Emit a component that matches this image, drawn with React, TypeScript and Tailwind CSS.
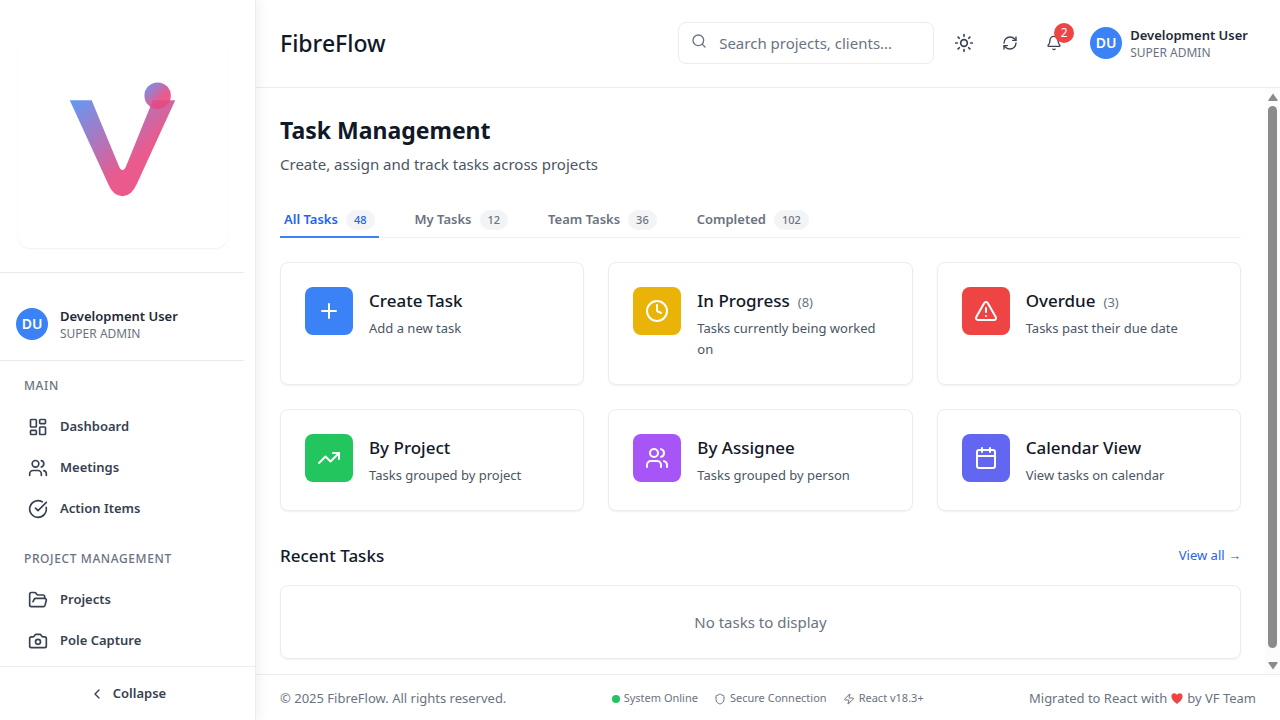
import type { ReactNode } from 'react';
import {
  Bell,
  Calendar,
  Camera,
  ChevronLeft,
  CircleCheckBig,
  Clock,
  FolderOpen,
  LayoutDashboard,
  Plus,
  RefreshCw,
  Search,
  Shield,
  Sun,
  TrendingUp,
  TriangleAlert,
  Users,
  Zap,
  type LucideIcon,
} from 'lucide-react';

type NavSection = { title: string; items: { label: string; icon: LucideIcon }[] };

const sections: NavSection[] = [
  {
    title: 'MAIN',
    items: [
      { label: 'Dashboard', icon: LayoutDashboard },
      { label: 'Meetings', icon: Users },
      { label: 'Action Items', icon: CircleCheckBig },
    ],
  },
  {
    title: 'PROJECT MANAGEMENT',
    items: [
      { label: 'Projects', icon: FolderOpen },
      { label: 'Pole Capture', icon: Camera },
    ],
  },
];

const tabs = [
  { label: 'All Tasks', count: 48, active: true },
  { label: 'My Tasks', count: 12, active: false },
  { label: 'Team Tasks', count: 36, active: false },
  { label: 'Completed', count: 102, active: false },
];

type CardData = { title: string; text: string; icon: LucideIcon; color: string; count?: number };

const cards: CardData[] = [
  { title: 'Create Task', text: 'Add a new task', icon: Plus, color: 'bg-[#3b82f6]' },
  { title: 'In Progress', text: 'Tasks currently being worked on', icon: Clock, color: 'bg-[#eab308]', count: 8 },
  { title: 'Overdue', text: 'Tasks past their due date', icon: TriangleAlert, color: 'bg-[#ef4444]', count: 3 },
  { title: 'By Project', text: 'Tasks grouped by project', icon: TrendingUp, color: 'bg-[#22c55e]' },
  { title: 'By Assignee', text: 'Tasks grouped by person', icon: Users, color: 'bg-[#a855f7]' },
  { title: 'Calendar View', text: 'View tasks on calendar', icon: Calendar, color: 'bg-[#6366f1]' },
];

function Logo() {
  return (
    <svg viewBox="0 0 208 208" className="block w-full" role="img" aria-label="Company logo">
      <defs>
        <linearGradient id="mark" x1="0" y1="0" x2="1" y2="1">
          <stop offset="0" stopColor="#4f8ff7" />
          <stop offset="0.62" stopColor="#e84880" />
          <stop offset="1" stopColor="#e84880" />
        </linearGradient>
      </defs>
      <g fill="url(#mark)" fillOpacity="0.9">
        <path d="M51 60.500H73L99.500 124.500Q104 137 108.500 124.500L134.500 60.500H157L118.500 144.500Q113 157 104 157Q94.500 157 89.500 144.500Z" />
        <circle cx="139.300" cy="56" r="13.300" />
      </g>
    </svg>
  );
}

function Person() {
  return (
    <>
      <span className="flex size-8 shrink-0 items-center justify-center rounded-full bg-[#3b82f6] text-sm font-semibold text-white">
        DU
      </span>
      <span className="flex flex-col text-left">
        <span className="text-[13px] leading-5 font-semibold text-[#1f2937]">Development User</span>
        <span className="text-xs leading-4 text-[#6b7280]">SUPER ADMIN</span>
      </span>
    </>
  );
}

function Sidebar() {
  return (
    <aside className="z-10 flex w-64 shrink-0 flex-col border-r border-[#ececee] bg-white shadow-[2px_0_12px_rgba(0,0,0,0.07)]">
      <div className="min-h-0 flex-1 overflow-hidden pr-[11px]">
        <div className="border-b border-[#e9eaf0] pt-[39px] pr-[17px] pb-6 pl-[18px]">
          <div className="rounded-xl border border-transparent shadow-[0_1px_2px_rgba(0,0,0,0.06)]">
            <Logo />
          </div>
        </div>
        <div className="flex items-center gap-3 border-b border-[#e9eaf0] px-4 pt-[33px] pb-[18px]">
          <Person />
        </div>
        <nav className="pt-3">
          {sections.map((section) => (
            <section key={section.title} className="mb-[17px]">
              <h2 className="px-6 pt-[5px] pb-3 text-xs leading-4 font-medium tracking-wider text-[#6b7280]">{section.title}</h2>
              <ul className="flex flex-col">
                {section.items.map(({ label, icon: Icon }) => (
                  <li key={label}>
                    <a href="#" className="flex h-[41px] items-center gap-3 pl-7 text-[13px] font-semibold text-[#374151]">
                      <Icon className="size-5" />
                      {label}
                    </a>
                  </li>
                ))}
              </ul>
            </section>
          ))}
        </nav>
      </div>
      <div className="border-t border-[#ececee] p-2">
        <button className="flex h-[37px] w-full items-center justify-center gap-2 text-[13px] font-semibold text-[#374151]">
          <ChevronLeft className="size-4" />
          Collapse
        </button>
      </div>
    </aside>
  );
}

function IconButton({ label, children }: { label: string; children: ReactNode }) {
  return (
    <button aria-label={label} className="relative rounded-lg p-2 text-[#374151]">
      {children}
    </button>
  );
}

function Header() {
  return (
    <header className="flex h-[88px] shrink-0 items-center justify-between border-b border-[#ececee] px-6">
      <p className="text-[23px] font-medium text-[#111827]">FibreFlow</p>
      <div className="flex items-center gap-3 pb-0.5">
        <label className="flex h-[42px] w-64 items-center gap-3 rounded-lg border border-[#ececee] px-3">
          <Search className="mb-1 size-4 shrink-0 text-[#6b7280]" />
          <input
            type="search"
            aria-label="Search"
            placeholder="Search projects, clients..."
            className="w-full min-w-0 bg-transparent pt-0.5 text-[15px] text-[#111827] outline-none placeholder:text-[#6b7280]"
          />
        </label>
        <IconButton label="Toggle theme">
          <Sun className="size-5" />
        </IconButton>
        <IconButton label="Refresh">
          <RefreshCw className="size-4" />
        </IconButton>
        <IconButton label="Notifications">
          <Bell className="size-4" />
          <span className="absolute -top-1 -right-1 flex size-5 items-center justify-center rounded-full bg-[#ef4444] text-xs text-white">
            2
          </span>
        </IconButton>
        <button className="flex items-center gap-2 rounded-lg px-2">
          <Person />
        </button>
      </div>
    </header>
  );
}

function TaskCard({ title, text, icon: Icon, color, count }: CardData) {
  return (
    <article className="flex items-start gap-4 rounded-lg border border-[#ececee] p-6 shadow-[0_1px_2px_rgba(0,0,0,0.06)]">
      <div className={`flex size-12 shrink-0 items-center justify-center rounded-lg text-white ${color}`}>
        <Icon className="size-6" />
      </div>
      <div className="min-w-0 flex-1">
        <div className="flex items-baseline gap-2">
          <h3 className="text-[17px] leading-[27px] font-medium text-[#111827]">{title}</h3>
          {count !== undefined && <span className="text-[13px] text-[#6b7280]">({count})</span>}
        </div>
        <p className="mt-1 text-[13px] leading-[21px] text-[#4b5563]">{text}</p>
      </div>
    </article>
  );
}

function ScrollTrack() {
  return (
    <div aria-hidden="true" className="flex w-[15px] shrink-0 flex-col items-center bg-[#fcfcfc] pt-[5px] pb-1 text-[#8b8b8b]">
      <svg viewBox="0 0 10 8" className="h-2 w-2.5" fill="currentColor">
        <path d="M5 0.500 9.600 7q.3 1-.8 1H1.200Q.1 8 .4 7Z" />
      </svg>
      <div className="mt-[5px] mb-3.5 w-[9px] flex-1 rounded-full bg-[#8b8b8b]" />
      <svg viewBox="0 0 10 8" className="h-2 w-2.5" fill="currentColor">
        <path d="M5 7.500 9.600 1q.3-1-.8-1H1.200Q.1 0 .4 1Z" />
      </svg>
    </div>
  );
}

function Footer() {
  return (
    <footer className="flex h-[46px] shrink-0 items-center justify-between border-t border-[#ececee] px-6 pt-0.5 text-[13px] text-[#6b7280]">
      <p>© 2025 FibreFlow. All rights reserved.</p>
      <ul className="flex items-center gap-4 text-[11px]">
        <li className="flex items-center gap-1">
          <span className="size-2 rounded-full bg-[#22c55e]" />
          System Online
        </li>
        <li className="flex items-center gap-1">
          <Shield className="size-3" />
          Secure Connection
        </li>
        <li className="flex items-center gap-1">
          <Zap className="size-3" />
          React v18.3+
        </li>
      </ul>
      <p className="flex items-center gap-1">
        Migrated to React with
        <svg viewBox="0 0 12 11" className="h-[11px] w-3" fill="#ef4444" role="img" aria-label="love">
          <path d="M6 11C3 8.800.4 6.400.4 3.500.4 1.500 1.800.3 3.300.3 4.500.3 5.500 1 6 2 6.500 1 7.500.3 8.700.3c1.500 0 2.900 1.200 2.900 3.200C11.600 6.400 9 8.800 6 11Z" />
        </svg>
        by VF Team
      </p>
    </footer>
  );
}

export default function App() {
  return (
    <div className="flex h-screen bg-white font-['Noto_Sans','Open_Sans',sans-serif]">
      <Sidebar />
      <div className="flex min-w-0 flex-1 flex-col">
        <Header />
        <div className="flex min-h-0 flex-1">
          <main className="min-w-0 flex-1 overflow-hidden p-6">
            <h1 className="text-[23px] leading-9 font-bold text-[#111827]">Task Management</h1>
            <p className="mt-1 text-[15px] leading-6 text-[#4b5563]">Create, assign and track tasks across projects</p>
            <div role="tablist" className="mt-6 flex gap-8 border-b border-[#f0f1f3]">
              {tabs.map((tab) => (
                <button
                  key={tab.label}
                  role="tab"
                  aria-selected={tab.active}
                  className={
                    tab.active
                      ? '-mb-px flex items-center gap-2 border-b-2 border-[#3b82f6] px-1 pt-2.5 pb-1.5 text-[13px] font-semibold text-[#2563eb]'
                      : '-mb-px flex items-center gap-2 border-b-2 border-transparent px-1 pt-2.5 pb-1.5 text-[13px] font-semibold text-[#6b7280]'
                  }
                >
                  {tab.label}
                  <span className="rounded-full bg-[#f3f4f6] px-2 text-[11px] leading-5 font-medium">{tab.count}</span>
                </button>
              ))}
            </div>
            <div className="mt-6 grid grid-cols-3 gap-6">
              {cards.map((card) => (
                <TaskCard key={card.title} {...card} />
              ))}
            </div>
            <div className="mt-[31px] flex items-center justify-between">
              <h2 className="text-[17px] leading-[27px] font-medium text-[#111827]">Recent Tasks</h2>
              <a href="#" className="text-[13px] text-[#2563eb]">
                View all →
              </a>
            </div>
            <div className="mt-4 rounded-lg border border-[#ececee] p-6 text-center text-[15px] leading-6 text-[#6b7280] shadow-[0_1px_2px_rgba(0,0,0,0.06)]">
              No tasks to display
            </div>
          </main>
          <ScrollTrack />
        </div>
        <Footer />
      </div>
    </div>
  );
}
